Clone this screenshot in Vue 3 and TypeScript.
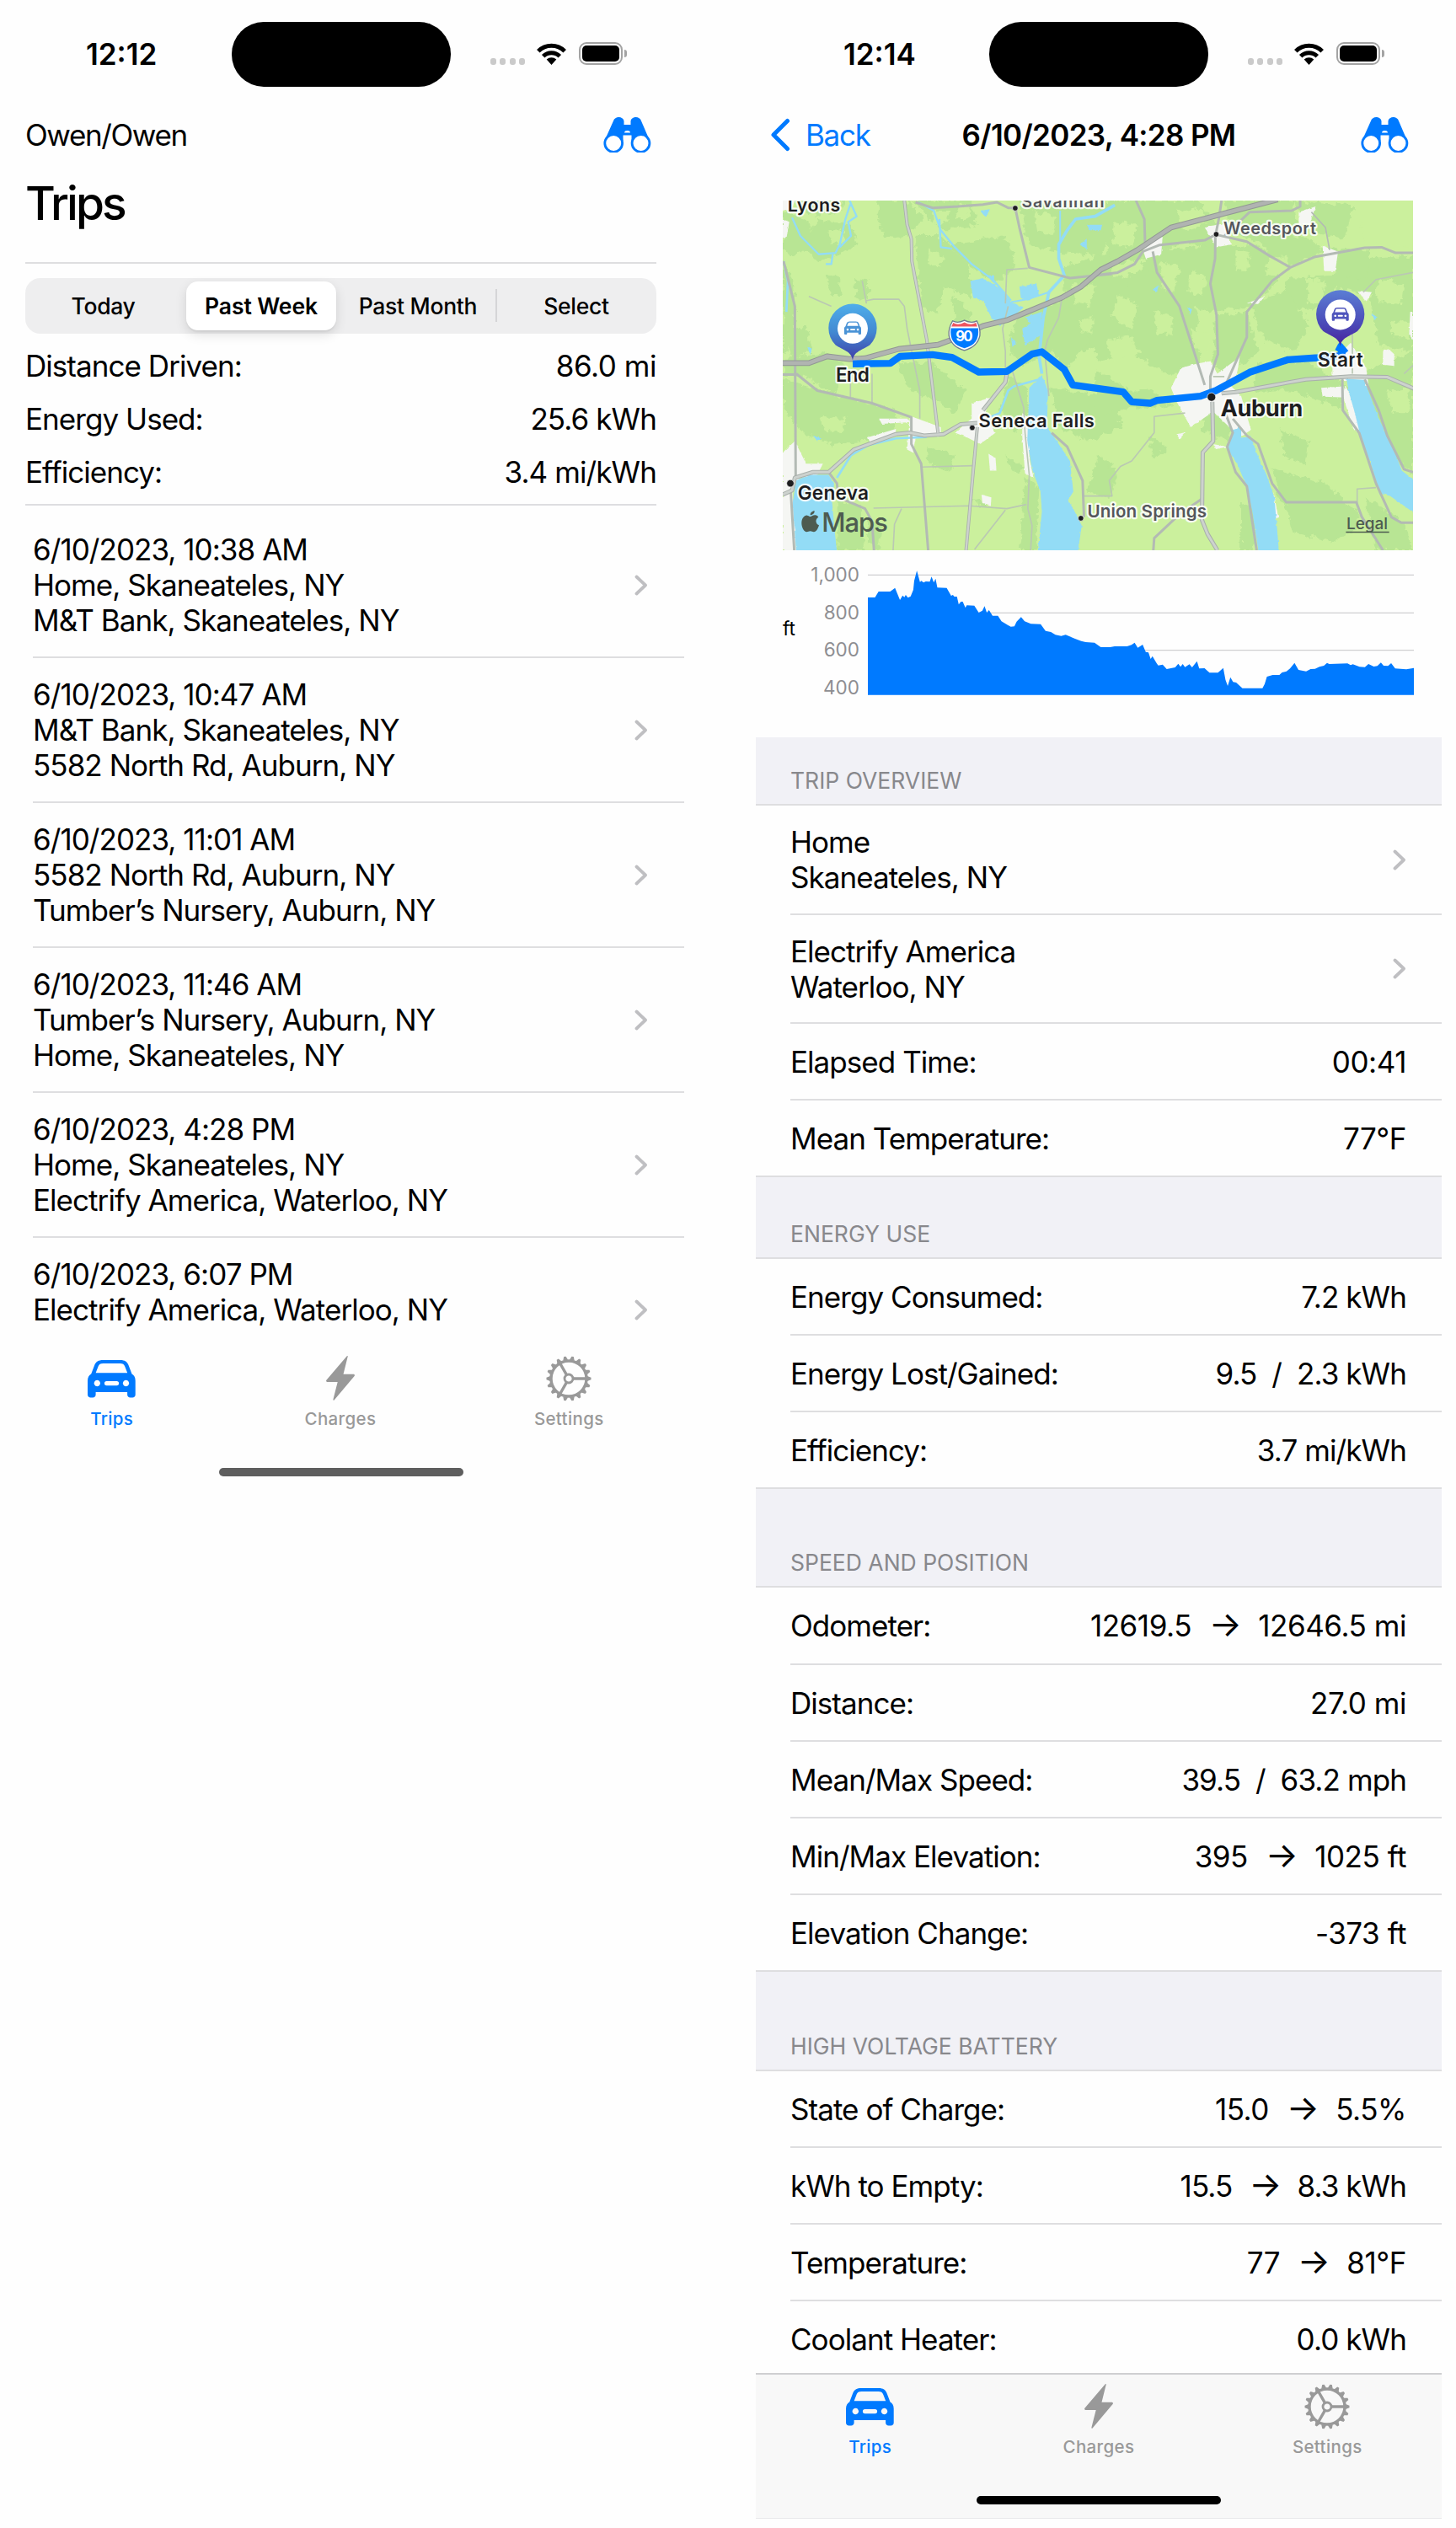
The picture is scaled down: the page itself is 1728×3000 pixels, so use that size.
<script setup lang="ts">
interface Row { label: string; value?: string; sub?: string }
interface Section { title: string; height: number; rows: Row[] }

const segments = ['Today', 'Past Week', 'Past Month', 'Select']
const totals: Row[] = [
  { label: 'Distance Driven:', value: '86.0 mi' },
  { label: 'Energy Used:', value: '25.6 kWh' },
  { label: 'Efficiency:', value: '3.4 mi/kWh' },
]
const trips: string[][] = [
  ['6/10/2023, 10:38 AM', 'Home, Skaneateles, NY', 'M&T Bank, Skaneateles, NY'],
  ['6/10/2023, 10:47 AM', 'M&T Bank, Skaneateles, NY', '5582 North Rd, Auburn, NY'],
  ['6/10/2023, 11:01 AM', '5582 North Rd, Auburn, NY', 'Tumber’s Nursery, Auburn, NY'],
  ['6/10/2023, 11:46 AM', 'Tumber’s Nursery, Auburn, NY', 'Home, Skaneateles, NY'],
  ['6/10/2023, 4:28 PM', 'Home, Skaneateles, NY', 'Electrify America, Waterloo, NY'],
  ['6/10/2023, 6:07 PM', 'Electrify America, Waterloo, NY'],
]
const sections: Section[] = [
  {
    title: 'TRIP OVERVIEW', height: 81, rows: [
      { label: 'Home', sub: 'Skaneateles, NY' },
      { label: 'Electrify America', sub: 'Waterloo, NY' },
      { label: 'Elapsed Time:', value: '00:41' },
      { label: 'Mean Temperature:', value: '77°F' },
    ],
  },
  {
    title: 'ENERGY USE', height: 97, rows: [
      { label: 'Energy Consumed:', value: '7.2 kWh' },
      { label: 'Energy Lost/Gained:', value: '9.5  /  2.3 kWh' },
      { label: 'Efficiency:', value: '3.7 mi/kWh' },
    ],
  },
  {
    title: 'SPEED AND POSITION', height: 117, rows: [
      { label: 'Odometer:', value: '12619.5  →  12646.5 mi' },
      { label: 'Distance:', value: '27.0 mi' },
      { label: 'Mean/Max Speed:', value: '39.5  /  63.2 mph' },
      { label: 'Min/Max Elevation:', value: '395  →  1025 ft' },
      { label: 'Elevation Change:', value: '-373 ft' },
    ],
  },
  {
    title: 'HIGH VOLTAGE BATTERY', height: 118, rows: [
      { label: 'State of Charge:', value: '15.0  →  5.5%' },
      { label: 'kWh to Empty:', value: '15.5  →  8.3 kWh' },
      { label: 'Temperature:', value: '77  →  81°F' },
      { label: 'Coolant Heater:', value: '0.0 kWh' },
    ],
  },
]
const tabs = ['Trips', 'Charges', 'Settings']
const teeth = Array.from({ length: 18 }, (_, i) => i * 20 + 10)

// Splits "a → b" so that the arrow can be set larger than the figures
const parts = (value = ''): string[] => value.split(/(→)/)
// Values with a wide unit are tracked tighter than plain figures
const isWide = (value = ''): boolean => /kWh|mph/.test(value)

const carPath = 'M18 0H39c5 0 8 2 9.5 6l4 10.5c2.6 1.5 4.2 4 4.2 8V41c0 2-1.5 3.5-3.5 3.5h-2.6c-2 0-3.5-1.5-3.5-3.5V38H9.6v3c0 2-1.5 3.5-3.5 3.5H3.5C1.5 44.500 0 43 0 41V24.500c0-4 1.700-6.500 4.200-8L8.200 6C9.700 2 13 0 18 0z M18.500 4C15 4 13.500 5 12.600 7.500L9.600 15.300H47.200L44.200 7.500C43.300 5 41.800 4 38.300 4z M11.300 23.800a3.700 3.700 0 1 0 .01 0z M45.500 23.800a3.700 3.700 0 1 0 .01 0z M22.500 25a2.500 2.500 0 0 0 0 5.200h12a2.500 2.500 0 0 0 0-5.200z'

const elevation = '246,177 262,177 270,156 296,156 307,143 318,186 324,170 328,176 331,168 336,178 342,173 348,150 350,118 356,82 363,122 366,118 371,124 376,120 385,121 389,103 394,124 398,110 402,142 423,143 433,171 437,168 440,174 446,174 450,202 455,192 459,192 465,214 468,205 485,206 495,231 503,224 508,208 513,231 518,222 526,242 538,242 546,262 560,275 567,281 575,280 580,263 590,247 598,262 612,271 634,272 645,296 657,300 667,310 680,314 690,310 710,323 725,332 735,336 755,338 769,354 790,354 800,351 828,351 838,346 845,338 852,356 863,345 870,371 876,373 881,396 885,386 894,410 898,419 908,416 917,432 936,426 943,413 948,424 953,414 958,425 968,415 974,426 985,404 990,430 1002,429 1013,445 1032,445 1037,438 1044,428 1049,470 1054,492 1060,461 1066,478 1073,480 1087,500 1132,500 1137,485 1142,459 1155,453 1170,453 1176,444 1186,440 1194,430 1204,410 1213,435 1230,440 1240,432 1250,431 1260,424 1270,420 1277,410 1282,414 1323,412 1330,418 1335,415 1350,424 1362,425 1370,414 1382,423 1390,421 1398,409 1404,420 1414,421 1421,411 1430,430 1455,433 1472,428 1472,524 246,524'

// Woodland areas, in map units
const woods = [
  '27,60 110,90 150,190 60,220 27,200', '90,24 250,24 240,60 150,80 100,60', '150,90 270,110 300,180 220,220 150,240 100,190',
  '27,240 60,300 75,420 50,560 27,570', '50,480 110,470 130,560 60,590', '180,290 230,300 240,360 200,360', '280,300 330,310 330,380 290,370',
  '190,560 260,620 210,720 110,650 27,650 27,590', '27,660 160,700 430,770 430,860 330,880 200,890 100,850 27,760',
  '360,24 470,24 530,90 450,160 380,150', '490,24 700,24 720,110 600,130 540,80', '500,150 590,150 690,250 700,370 600,330 580,430 520,400',
  '620,180 820,150 860,260 780,320 700,260', '870,24 1140,24 1200,120 1160,220 1020,210 900,180', '1030,260 1200,200 1200,520 1100,560 1030,520',
  '860,430 1030,380 1120,520 1040,620 980,560 880,610 830,560', '430,600 560,600 680,700 640,780 560,730 480,700', '630,360 700,420 680,470 640,450',
  '830,650 900,690 900,820 850,850 800,760', '980,690 1200,720 1240,830 1120,880 1010,830', '540,900 640,930 620,990 550,960',
  '890,1000 940,1050 930,1268 870,1268 880,1150', '820,930 890,980 850,1000', '1150,930 1200,960 1190,1080 1110,1060', '330,1160 380,1180 370,1268 330,1240',
  '225,1090 300,1110 320,1268 220,1268', '700,1080 760,1100 740,1120',
  '1140,24 1500,24 1600,130 1560,200 1460,170 1330,220 1200,260', '1320,200 1700,180 1840,260 1700,400 1560,420 1400,380 1300,300',
  '1140,290 1340,300 1500,420 1520,640 1400,640 1250,560 1140,600', '1570,430 1680,420 1720,560 1620,660 1560,600', '1840,24 2060,40 2030,160 1930,140',
  '1700,120 1900,160 1960,200 1800,280', '1600,24 1840,24 1860,110 1760,180 1620,140', '2000,240 2272,220 2272,560 2150,540 2120,360 1980,330', '1820,300 2000,290 1990,380 1900,420 1800,380', '1720,600 1900,600 2060,700 2010,760 1840,700 1700,700',
  '1950,190 2120,200 2110,300 2000,290', '1690,380 1830,350 1900,470 1850,560 1740,520', '1260,280 1420,270 1500,420 1380,480 1250,420',
  '2060,650 2272,560 2272,1000 2200,930 2140,780', '1140,620 1260,700 1340,700 1420,760 1240,760 1140,800', '1800,840 1900,880 1890,960 1810,930',
  '1530,760 1640,810 1610,880 1520,840', '1770,980 1960,1030 2090,1150 1960,1200 1800,1100', '1140,950 1220,980 1200,1060 1140,1060',
  '1820,1110 2030,1110 2090,1180 1980,1240 1840,1200', '1660,1100 1720,1120 1700,1268 1660,1268', '2100,1080 2240,1170 2272,1268 2140,1268',
  '1330,860 1400,900 1350,940',
]
const clearings = [
  '190,130 240,120 250,170 200,180', '660,40 700,50 680,90 640,90', '920,60 1000,80 990,150 930,130', '1060,320 1140,330 1120,400 1070,390',
  '1210,100 1290,110 1270,190 1200,180', '1370,240 1440,260 1420,350 1380,340', '1480,270 1540,300 1520,360 1470,350', '1220,360 1290,390 1270,480 1200,440',
  '1640,200 1690,210 1680,280 1640,270', '1760,230 1830,220 1820,300 1750,290', '1180,520 1260,500 1300,570 1200,590', '1350,420 1420,440 1410,500 1360,500',
  '1480,480 1540,500 1540,560 1490,550', '1890,300 1960,310 1950,390 1900,390', '2080,60 2272,60 2272,190 2100,180', '2150,300 2240,320 2230,390 2140,380',
  '2190,450 2260,460 2250,510 2200,510', '160,790 250,800 240,850 170,840', '560,60 620,60 620,100 570,110', '1080,450 1130,440 1130,490 1090,490', '2180,700 2250,690 2260,780 2200,780',
  '1430,60 1520,50 1530,110 1450,130', '1640,600 1690,610 1680,650 1640,640', '540,200 600,220 590,260 550,250',
]
const towns = [
  '27,24 70,24 60,50 27,60', '27,90 50,100 40,160 27,155', '27,920 70,880 110,960 170,960 150,1000 90,1010 60,1040 75,1268 27,1268',
  '480,790 590,830 590,860 500,870 490,920 470,910', '700,745 768,725 745,790 785,850 730,890 680,865 640,850 700,800', '370,800 470,800 480,812 380,818',
  '330,866 430,836 430,862 340,890', '760,925 785,940 788,985 765,985', '880,780 905,800 905,940 920,1010 890,995 880,860',
  '1325,180 1380,150 1375,215 1320,230 1310,200', '1530,120 1595,105 1625,180 1570,190 1555,160', '1865,65 1925,45 1905,105 1865,112', '1950,185 2005,205 1995,275 1955,275',
  '1410,690 1445,620 1500,605 1550,595 1575,640 1655,580 1645,640 1620,680 1660,720 1695,840 1655,865 1560,775 1480,830 1430,740', '1680,390 1745,365 1720,392',
  '1985,615 2020,560 2050,530 2105,620 2115,690 2040,665 1985,655', '2165,560 2185,552 2205,570 2205,612 2165,608', '1945,690 2025,685 2035,725 1950,722',
  '2030,680 2060,740 2088,850 2062,840 2025,730', '1430,855 1462,848 1440,872', '1560,890 1610,900 1570,908', '1775,1060 1792,1150 1775,1165', '2075,345 2125,350 2105,385', '2262,420 2272,420 2272,520 2258,500', '735,1070 770,1080 768,1108 738,1100',
]
</script>

<template>
  <svg class="defs" aria-hidden="true">
    <symbol id="binoculars" viewBox="0 0 57 42">
      <path fill="#007aff" fill-rule="evenodd" d="M12 4.500C13.500-1.500 23.500-1.500 24.500 4.500V9h8V4.500C33.500-1.500 43.500-1.500 45 4.500L55.500 29 44 32 33.500 28V21.500h-10V28L12 32 1 29zM28.500 16c-2 0-3.500.8-3.500 2.500h7C32 16.800 30.500 16 28.500 16z" />
      <circle cx="12.200" cy="31" r="10.400" fill="#fff" stroke="#007aff" stroke-width="2.800" /><circle cx="44.500" cy="31" r="10.400" fill="#fff" stroke="#007aff" stroke-width="2.800" />
    </symbol>
    <symbol id="wifi" viewBox="0 0 35 26">
      <g fill="none" stroke="#000" stroke-width="5"><path d="M1.800 9.700a22.300 22.300 0 0 1 31.400 0" /><path d="M7.700 15.800a14 14 0 0 1 19.600 0" /></g>
      <path d="M11.700 19.500a8.300 8.300 0 0 1 11.600 0L17.500 26z" />
    </symbol>
    <symbol id="chev" viewBox="0 0 16 25"><path d="M2.500 2.500 13 12.500 2.500 22.500" fill="none" stroke="#bfbfc2" stroke-width="3.800" stroke-linecap="round" stroke-linejoin="round" /></symbol>
  </svg>

  <main class="board">
    <section class="phone left">
      <div class="status">
        <span class="time">12:12</span><span class="island" />
        <span class="signal"><i v-for="n in 4" :key="n" /></span>
        <svg class="wifi"><use href="#wifi" /></svg>
        <span class="battery"><b /></span><span class="knob" />
      </div>
      <div class="account"><span>Owen/Owen</span><svg class="bino"><use href="#binoculars" /></svg></div>
      <h1>Trips</h1>
      <div class="summary">
        <div class="segmented">
          <span v-for="(s, i) in segments" :key="s" :class="{ on: i === 1, div: i === 3 }">{{ s }}</span>
        </div>
        <div v-for="t in totals" :key="t.label" class="total"><span>{{ t.label }}</span><span class="value" :class="{ wide: isWide(t.value) }">{{ t.value }}</span></div>
      </div>
      <div class="trips">
        <div v-for="t in trips" :key="t[0]" class="trip">
          <div><p v-for="line in t" :key="line">{{ line }}</p></div>
          <svg class="chev"><use href="#chev" /></svg>
        </div>
      </div>
      <nav class="tabbar">
        <div v-for="(t, i) in tabs" :key="t" class="tab" :class="{ active: i === 0 }">
          <svg v-if="i === 0" class="car" viewBox="0 0 57 44.500"><path fill-rule="evenodd" :d="carPath" /></svg>
          <svg v-else-if="i === 1" class="bolt" viewBox="0 0 34 53"><path d="M25.800.4 20.500 21.800H32.800q1.800.4.8 2.200L9.600 52.400q-1.200.8-1.200-.6L13.700 31H1.300Q-.6 30.600.4 28.800L24.500.5q1-1 1.300-.1z" /></svg>
          <svg v-else class="gear" viewBox="-27 -27 54 54">
            <path v-for="a in teeth" :key="a" :transform="`rotate(${a})`" d="M-3-22-1.200-26.500H1.200L3-22z" />
            <g fill="none" stroke="#999" stroke-width="3.400"><circle r="21" /><circle r="5" stroke-width="2.800" /><path d="M5 0H20M-2.500-4.300-10.300-18M-2.500 4.300-10.300 18" /></g>
          </svg>
          <span>{{ t }}</span>
        </div>
      </nav>
      <div class="home" />
    </section>

    <section class="phone right">
      <div class="status">
        <span class="time">12:14</span><span class="island" />
        <span class="signal"><i v-for="n in 4" :key="n" /></span>
        <svg class="wifi"><use href="#wifi" /></svg>
        <span class="battery"><b /></span><span class="knob" />
      </div>
      <header class="navbar">
        <span class="back"><svg viewBox="0 0 24 40"><path d="M20.500 3.500 4 20 20.500 36.500" fill="none" stroke="#007aff" stroke-width="5" stroke-linecap="round" stroke-linejoin="round" /></svg>Back</span>
        <strong>6/10/2023, 4:28 PM</strong>
        <svg class="bino"><use href="#binoculars" /></svg>
      </header>

      <svg class="map" viewBox="27 24 2245 1244" preserveAspectRatio="none">
        <defs>
          <filter id="rough" x="-5%" y="-5%" width="110%" height="110%">
            <feTurbulence type="fractalNoise" baseFrequency="0.045" numOctaves="3" seed="7" />
            <feDisplacementMap in="SourceGraphic" scale="34" xChannelSelector="R" yChannelSelector="G" />
          </filter>
          <filter id="shore" x="-5%" y="-5%" width="110%" height="110%">
            <feTurbulence type="fractalNoise" baseFrequency="0.08" numOctaves="2" seed="3" />
            <feDisplacementMap in="SourceGraphic" scale="8" xChannelSelector="R" yChannelSelector="G" />
          </filter>
          <linearGradient id="pinEnd" x1="0" y1="0" x2="0" y2="1"><stop offset="0" stop-color="#4eaeea" /><stop offset=".5" stop-color="#4289d2" /><stop offset="1" stop-color="#403da8" /></linearGradient>
          <linearGradient id="pinStart" x1="0" y1="0" x2="0" y2="1"><stop offset="0" stop-color="#5b7ed4" /><stop offset=".6" stop-color="#4b4ab8" /><stop offset="1" stop-color="#48209c" /></linearGradient>
        </defs>
        <rect x="27" y="24" width="2245" height="1244" fill="#cbf09d" />
        <g filter="url(#rough)">
          <polygon v-for="(p, i) in woods" :key="'w' + i" :points="p" fill="#b8e594" />
          <polygon v-for="(p, i) in clearings" :key="'c' + i" :points="p" fill="#cbf09d" />
        </g>
        <g filter="url(#shore)">
          <polygon v-for="(p, i) in towns" :key="'t' + i" :points="p" fill="#f5f6f3" />
          <g fill="#93dcf6">
            <polygon points="75,1020 120,1000 190,1000 210,1030 203,1100 212,1200 220,1275 75,1275 68,1180 62,1100" />
            <polygon points="905,690 950,645 972,700 968,830 990,860 1050,950 1062,1060 1043,1090 1062,1120 1092,1180 1078,1275 935,1275 950,1130 945,1060 915,980 898,880" />
            <polygon points="1622,870 1695,865 1718,930 1750,1000 1778,1080 1795,1275 1722,1275 1698,1120 1675,1030 1645,960 1612,910" />
            <polygon points="2035,658 2098,662 2120,720 2150,800 2200,900 2232,985 2280,1022 2280,1138 2190,1075 2152,1065 2125,970 2092,890 2062,770 2042,700" />
            <polygon points="695,310 740,300 800,335 840,385 885,405 855,430 800,470 770,440 740,380 705,370" />
            <polygon points="870,330 930,320 940,360 900,380 875,370" /><polygon points="890,440 950,420 950,500 890,540 880,480 910,460" /><polygon points="730,60 765,55 750,85" />
            <polygon points="1085,180 1110,160 1110,200" /><polygon points="755,290 780,290 780,320" /><polygon points="1110,110 1165,110 1160,130 1120,130" /><polygon points="115,545 130,550 125,575" /><polygon points="135,860 165,870 150,880" /><polygon points="1345,340 1365,325 1360,350" /><polygon points="1470,405 1485,410 1478,430" /><polygon points="2125,425 2145,440 2135,450" /><polygon points="840,510 860,530 845,545" /><polygon points="1630,840 1660,830 1660,880 1625,880" />
          </g>
        </g>
        <g fill="none" stroke="#93dcf6" stroke-width="7" stroke-linejoin="round">
          <path d="M60 85 90 150 155 215 215 210 230 180 250 90 270 30 M265 24 290 80 260 100 270 150 230 190 M180 250H200L205 215" />
          <path d="M510 30 565 60 590 130 640 190 700 250 780 310 840 380 M585 90 590 190 630 195" />
          <path d="M1210 40 1140 80 1070 90 1040 130 1010 180 1010 230 1030 290 975 350 955 440 940 580 950 640" stroke-width="11" />
          <path d="M1015 60V180M975 350 900 375 840 385" stroke-width="6" />
          <path d="M940 660 850 685 830 700 800 780 750 800M220 1010 270 930 330 895 430 870 540 865M30 240 45 310 40 420" stroke-width="8" />
        </g>
        <g fill="none" stroke-linejoin="round">
          <g stroke="#bac8b3" stroke-width="5">
            <path d="M120 365 200 400M310 310 325 390M325 380 350 375 440 375 460 400 470 480 515 700 515 800M345 640V750M268 640V730M820 390 825 270 900 265M520 972 705 967M350 1118 690 1110 825 1120 895 1105M820 1125 710 1265M450 1120 425 1175 420 1268M830 400 810 480 820 560 820 640M1020 380 1010 440 970 520 960 560 975 720M845 630 885 760 890 850 905 1000 900 1120 915 1180 910 1268M1140 1075H1200L1190 1020 1230 970 1270 950 1350 850V792L1460 780M1560 650H1600M2056 480V640M2095 350 2140 305 2272 280M1100 1075H1140M2073 1110V1050L2140 1045M2240 640 2272 610" />
          </g>
          <g stroke="#b3bab4" stroke-width="9">
            <path d="M30 240 70 400 73 1010M55 1050 68 1268M75 640 150 700 345 745 485 795V890L520 960 545 1268M27 643H75M500 30 560 50 650 45 740 38 790 30 830 50 855 50 870 120 905 262 1050 300 1200 285M985 850 1040 900 1095 1020 1100 1150M190 990 220 1030 225 1080 320 1120 345 1165 352 1268M1140 290 1220 280 1280 250 1310 205 1370 182 1530 165 1570 145 1680 170 1760 220 1835 262" />
            <path d="M1285 24 1315 90 1318 190M1590 24 1580 90 1568 150 1567 230 1550 320 1572 430 1577 570 1550 650V700M1345 205 1360 280 1440 400 1530 680M1600 690 1680 510V420L1770 310 1835 262 1920 225 2100 192 2160 190 2210 210H2272M1600 150 1690 65 1840 60 1870 45 1870 24M1600 770 1630 850 1610 900 1640 990 1680 1040 1715 1268M1630 800 1680 860 1720 890 1770 1030 1820 1097H2070L2090 1150 2165 1268M2020 655 2022 770 2080 850 2140 1030 2195 1150 2230 1170H2272M2100 660 2150 770 2180 860 2240 980 2272 990M1347 1268 1350 1225 1440 1140 1520 1085" />
            <path d="M1910 65 1960 120 1975 200" stroke-width="5" />
          </g>
          <g stroke="#a8afab" stroke-width="15"><path d="M27 1070 60 1055 70 1010 135 990 190 990 280 910 430 855 480 850 530 860 600 855 660 820 720 815M825 640 820 670 740 770M1557 740 1560 880 1523 920 1520 1160 1540 1210 1575 1268M1590 710 1640 705 1890 660 2050 650 2180 652 2280 695" /><path stroke-width="12" d="M720 830 705 990 680 1268M460 24 470 110 485 160 487 240 540 520 580 850" /></g>
          <g stroke="#cdd2ce" stroke-width="9"><path d="M27 1070 60 1055 70 1010 135 990 190 990 280 910 430 855 480 850 530 860 600 855 660 820 720 815M825 640 820 670 740 770M1557 740 1560 880 1523 920 1520 1160 1540 1210 1575 1268M1590 710 1640 705 1890 660 2050 650 2180 652 2280 695" /><path stroke-width="7" d="M720 830 705 990 680 1268M460 24 470 110 485 160 487 240 540 520 580 850" /></g>
          <g stroke="#929795" stroke-width="20"><path d="M20 602H120L185 578 265 588 320 585 440 552 580 537 680 500 740 470 830 448 1020 370 1090 330 1160 270 1220 240 1290 200 1410 120 1600 70 1790 20" /></g>
          <g stroke="#b0b4b1" stroke-width="14"><path d="M20 602H120L185 578 265 588 320 585 440 552 580 537 680 500 740 470 830 448 1020 370 1090 330 1160 270 1220 240 1290 200 1410 120 1600 70 1790 20" /></g>
          <path d="M2013 545 2020 575 1935 583 1827 590 1690 635 1570 700 1515 720 1360 735 1335 745 1270 740 1240 705 1060 680 1030 625 950 562 915 570 825 632 725 634 630 582 560 572 445 578 410 603 276 605" stroke="#007aff" stroke-width="25" />
          <path d="M2003 560 2013 540 2034 565" stroke="#007aff" stroke-width="20" />
        </g>
        <g fill="#1d1d1f" stroke="#fff" stroke-width="2"><circle cx="855" cy="51" r="10" /><circle cx="1571" cy="144" r="10" /><circle cx="702" cy="832" r="10" /><circle cx="1089" cy="1154" r="10" /><circle cx="54" cy="1030" r="13" /><circle cx="1554" cy="723" r="15" /></g>
        <g class="place">
          <text x="44" y="62" font-size="64" textLength="188">Lyons</text>
          <text class="dim" x="878" y="48" font-size="58" textLength="294">Savannah</text>
          <text class="dim" x="1597" y="143" font-size="60" textLength="330">Weedsport</text>
          <text x="725" y="830" font-size="66" textLength="412">Seneca Falls</text>
          <text x="80" y="1087" font-size="68" textLength="253">Geneva</text>
          <text class="dim" x="1112" y="1152" font-size="62" textLength="425">Union Springs</text>
          <text class="city" x="1586" y="790" font-size="82" textLength="294">Auburn</text>
          <text x="216" y="668" font-size="68" textLength="120">End</text>
          <text x="1933" y="615" font-size="68" textLength="161">Start</text>
        </g>
        <g>
          <path d="M276 592C272 560 240 555 215 538A86 86 0 1 1 337 538C312 555 280 560 276 592z" fill="url(#pinEnd)" />
          <circle cx="276" cy="479" r="54" fill="#fff" /><path transform="translate(246 454) scale(1.060 1.050)" :d="carPath" fill="#4a93d6" fill-rule="evenodd" />
          <path d="M2013 543C2009 511 1977 506 1952 489A86 86 0 1 1 2074 489C2049 506 2017 511 2013 543z" fill="url(#pinStart)" />
          <circle cx="2013" cy="430" r="54" fill="#fff" /><path transform="translate(1983 405) scale(1.060 1.050)" :d="carPath" fill="#4f55bd" fill-rule="evenodd" />
        </g>
        <g>
          <path d="M632 452Q650 462 674 450 698 462 718 452 732 480 729 505 720 545 674 557 628 545 619 505 616 480 632 452z" fill="#fff" stroke="#6f7b90" stroke-width="4" />
          <path d="M634 459Q652 469 674 457 696 469 715 459L720 472H628z" fill="#ee5560" /><path d="M626 478H723Q730 536 674 549 618 536 626 478z" fill="#007aff" />
          <text x="643" y="524" class="shield" font-size="50" textLength="61">90</text>
        </g>
        <g fill="#4d5b50">
          <path transform="translate(94 1128)" d="M31 20C36 20 41 14 49 15 54 15.500 58 18 60 22 48 29 49 45 62 51 59 62 52 75 44 75 39 75 36 72 31 72 26 72 23 75 18 75 9 75-1 57 0 41 1 24 12 15 20 16 25 16.500 28 20 31 20zM31 15C30 7 38 0 46 0 47 8 40 15 31 15z" />
          <text x="166" y="1203" class="maps" font-size="93" textLength="236">Maps</text>
          <text x="2035" y="1193" class="legal" font-size="57" textLength="147">Legal</text><path d="M2033 1201H2187v5H2033z" />
        </g>
      </svg>

      <div class="chart">
        <span class="unit">ft</span>
        <div class="axis"><span>1,000</span><span>800</span><span>600</span><span>400</span></div>
        <svg class="plot" viewBox="246 60 1226 464" preserveAspectRatio="none">
          <path d="M246 97H1472M246 232H1472M246 365H1472" stroke="#cfcfd1" stroke-width="4" /><polygon :points="elevation" fill="#007aff" />
        </svg>
      </div>

      <div class="details">
        <template v-for="s in sections" :key="s.title">
          <div class="head" :style="{ height: s.height + 'px' }">{{ s.title }}</div>
          <div class="rows">
            <div v-for="r in s.rows" :key="r.label" class="row" :class="{ tall: r.sub }">
              <div><p>{{ r.label }}</p><p v-if="r.sub">{{ r.sub }}</p></div>
              <svg v-if="r.sub" class="chev"><use href="#chev" /></svg>
              <span v-else class="value" :class="{ wide: isWide(r.value) }"><span v-for="(p, i) in parts(r.value)" :key="i" :class="{ arrow: p === '→' }">{{ p }}</span></span>
            </div>
          </div>
        </template>
      </div>

      <div class="dock">
        <nav class="tabbar">
          <div v-for="(t, i) in tabs" :key="t" class="tab" :class="{ active: i === 0 }">
            <svg v-if="i === 0" class="car" viewBox="0 0 57 44.500"><path fill-rule="evenodd" :d="carPath" /></svg>
            <svg v-else-if="i === 1" class="bolt" viewBox="0 0 34 53"><path d="M25.800.4 20.500 21.800H32.800q1.800.4.8 2.200L9.600 52.400q-1.200.8-1.200-.6L13.700 31H1.300Q-.6 30.600.4 28.800L24.500.5q1-1 1.300-.1z" /></svg>
            <svg v-else class="gear" viewBox="-27 -27 54 54">
              <path v-for="a in teeth" :key="a" :transform="`rotate(${a})`" d="M-3-22-1.200-26.500H1.200L3-22z" />
              <g fill="none" stroke="#999" stroke-width="3.400"><circle r="21" /><circle r="5" stroke-width="2.800" /><path d="M5 0H20M-2.500-4.300-10.300-18M-2.500 4.300-10.300 18" /></g>
            </svg>
            <span>{{ t }}</span>
          </div>
        </nav>
        <div class="home" />
      </div>
    </section>
  </main>
</template>

<style>
body { margin: 0; background: #fff; }
</style>

<style scoped>
.defs { position: absolute; width: 0; height: 0; }
.board { width: 1728px; height: 3000px; overflow: hidden; display: flex; background: #fefefe; color: #000; font-family: Inter, "Liberation Sans", sans-serif; font-size: 35px; line-height: 42.200px; letter-spacing: -0.95px; }
p, h1 { margin: 0; }
.phone { box-sizing: border-box; width: 814px; flex: none; display: flex; flex-direction: column; }
.left { margin-left: -2px; height: 1770px; }
.right { margin-left: 85px; height: 2989px; }
.status { height: 129px; display: flex; flex: none; }
.time { width: 171px; margin: 43px 0 0 104px; font-weight: 600; letter-spacing: 0; }
.island { width: 260px; height: 77px; margin: 26px 0 0 2px; border-radius: 38px; background: #000; }
.signal { display: flex; gap: 4.300px; margin: 69px 0 0 47px; }
.signal i { width: 7px; height: 8px; border-radius: 3px; background: #cacaca; }
.wifi { width: 35px; height: 26px; margin: 50.500px 0 0 14px; }
.battery { box-sizing: border-box; width: 52px; height: 27px; margin: 50px 0 0 15px; padding: 2px; border: 2px solid #a3a3a3; border-radius: 9px; }
.battery b { display: block; height: 100%; border-radius: 5px; background: #000; }
.knob { width: 3px; height: 9px; margin: 59px 0 0 2px; border-radius: 0 3px 3px 0; background: #a3a3a3; }
.account { height: 62px; display: flex; justify-content: space-between; align-items: center; padding: 0 39px 0 32px; letter-spacing: -1.400px; }
.bino { width: 57px; height: 42px; }
h1 { height: 120px; padding: 15px 0 0 32px; box-sizing: border-box; font-size: 55px; line-height: 70px; font-weight: 450; letter-spacing: -2.900px; }
.summary { box-sizing: border-box; height: 289px; margin: 0 33px 0 32px; border: solid #dedee0; border-width: 2px 0; }
.segmented { box-sizing: border-box; height: 66px; margin: 17px 0 7px; padding: 4px; display: grid; grid-template-columns: 187px 178px 1fr 187px; border-radius: 18px; background: #eeeeef; font-size: 26.500px; font-weight: 500; letter-spacing: -0.3px; }
.segmented span { display: flex; align-items: center; justify-content: center; position: relative; padding-left: 5px; }
.segmented span:first-child { padding: 0 10px 0 0; font-weight: 450; }
.segmented .on { padding: 0; background: #fff; border-radius: 14px; font-weight: 600; letter-spacing: -0.1px; box-shadow: 0 5px 14px rgba(0, 0, 0, .12), 0 2px 2px rgba(0, 0, 0, .05); }
.segmented .div::before { content: ""; position: absolute; left: 0; top: 9px; width: 2px; height: 39px; background: #d5d5d7; }
.total { height: 63px; display: flex; justify-content: space-between; align-items: center; }
.trips { padding: 9px 0 0 41px; height: 1004px; flex: none; box-sizing: border-box; overflow: hidden; }
.trip { box-sizing: border-box; height: 172px; padding: 22px 43px 0 0; display: flex; justify-content: space-between; border-bottom: 2px solid #dedee0; }
.trip:last-child { border: 0; }
.trip .chev { margin-top: 51px; }
.chev { width: 16px; height: 25px; }
.tabbar { display: flex; height: 104px; flex: none; }
.left .tabbar { padding-top: 5px; box-sizing: border-box; }
.tab { width: 271.300px; display: flex; flex-direction: column; align-items: center; color: #999; fill: #999; font-size: 20.500px; line-height: 26px; font-weight: 500; letter-spacing: .35px; }
.left .tab { position: relative; left: -1px; }
.tab.active { color: #007aff; fill: #007aff; }
.car { width: 57px; height: 44.500px; margin: 5px 0 12.500px; }
.bolt { width: 34px; height: 53px; margin-bottom: 9px; }
.gear { width: 54px; height: 54px; margin-bottom: 8px; }
.home { width: 290px; height: 10px; margin: 34px auto 0; border-radius: 5px; background: #5e5e5e; }
.navbar { height: 62px; display: grid; grid-template-columns: 226px 1fr 226px; align-items: center; }
.navbar strong { text-align: center; font-weight: 600; letter-spacing: -0.65px; }
.navbar .bino { justify-self: end; margin-right: 39px; }
.back { display: flex; align-items: center; gap: 18px; padding-left: 17px; color: #007aff; letter-spacing: -1.300px; }
.back svg { width: 24px; height: 40px; }
.map { display: block; flex: none; width: 748px; height: 415px; margin: 47px 0 0 32px; }
.place text { fill: #1d1d1f; font-weight: 600; paint-order: stroke; stroke: rgba(255, 255, 255, .85); stroke-width: 13px; stroke-linejoin: round; letter-spacing: 0; }
.place .dim { fill: #55565b; }
.place .city { font-weight: 700; }
.shield { fill: #fff; font-weight: 700; letter-spacing: 0; }
.maps { font-weight: 500; letter-spacing: 0; }
.legal { font-weight: 500; letter-spacing: 0; }
.chart { display: flex; height: 222px; flex: none; padding-left: 32px; box-sizing: border-box; font-size: 22.500px; line-height: 44.700px; letter-spacing: 0; }
.unit { width: 30px; padding-top: 71px; }
.axis { width: 61px; padding-top: 7px; display: flex; flex-direction: column; text-align: right; color: #8e8e92; }
.plot { width: 648px; height: 154.700px; margin: 17px 0 0 10px; }
.details { height: 1941px; flex: none; overflow: hidden; }
.head { box-sizing: border-box; padding: 0 0 8px 41px; display: flex; align-items: flex-end; background: #f1f1f6; border-bottom: 2px solid #dedee0; color: #88888c; font-size: 26.500px; line-height: 40px; letter-spacing: 0; }
.rows { padding-left: 41px; }
.row { box-sizing: border-box; height: 91.100px; padding: 1px 42px 0 0; display: flex; align-items: center; justify-content: space-between; border-bottom: 2px solid #dedee0; }
.row:last-child { margin-left: -41px; padding-left: 41px; }
.row.tall { height: 129.500px; }
.value { white-space: pre; letter-spacing: -0.45px; }
.value.wide { letter-spacing: -0.9px; }
.arrow { margin: 0 1px 0 2px; font-size: 41px; line-height: 30px; }
.dock { height: 173px; flex: none; box-sizing: border-box; border-top: 2px solid #cfcfd1; border-bottom: 1px solid #e8e8ea; background: #f8f8f8; padding-top: 11px; }
.dock .home { margin-top: 29px; background: #000; }
</style>
